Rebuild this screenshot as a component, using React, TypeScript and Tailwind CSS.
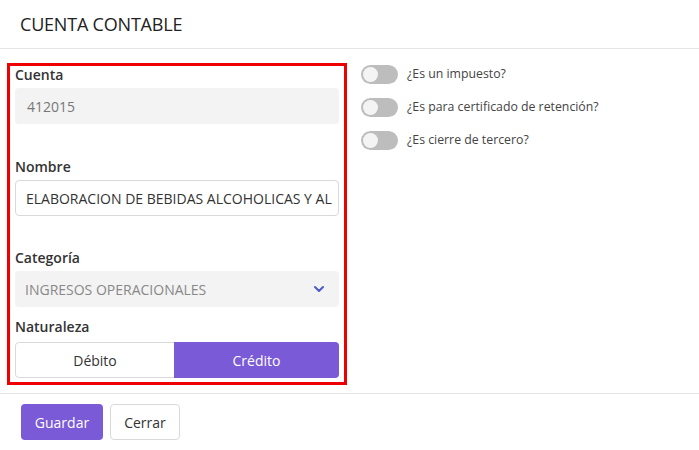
import { ChevronDown } from "lucide-react";

function Toggle({ label }: { label: string }) {
  return (
    <div className="flex items-center gap-[9px]">
      <span className="flex h-[19px] w-[37px] items-center rounded-full bg-[#bdbdbd] px-[2px]">
        <span className="h-[15px] w-[15px] rounded-full bg-[#f4f4f4]" />
      </span>
      <span className="text-[12.3px] text-[#444]">{label}</span>
    </div>
  );
}

export default function App() {
  return (
    <div
      className="flex h-[450px] w-[699px] flex-col bg-white text-[#333]"
      style={{ fontFamily: '"Open Sans", "Noto Sans", sans-serif' }}
    >
      <div className="flex h-[49px] items-center border-b border-[#e5e5e5] px-[20px]">
        <h1 className="text-[18px] tracking-[-0.2px] text-[#222]">CUENTA CONTABLE</h1>
      </div>

      <div className="flex gap-[14px] pl-[7px] pt-[14px]">
        <div className="flex w-[340px] flex-col border-[3px] border-[#ee0000] px-[5px] pb-[4px]">
          <label className="text-[14px] leading-[18px] font-semibold text-[#333]">Cuenta</label>
          <div className="mt-[4px] flex h-[36px] items-center rounded-[4px] bg-[#f3f3f3] px-[12px] text-[14px] text-[#777]">
            412015
          </div>

          <label className="mt-[34px] text-[14px] leading-[18px] font-semibold text-[#333]">Nombre</label>
          <div className="mt-[4px] flex h-[36px] items-center overflow-hidden whitespace-nowrap rounded-[4px] border border-[#d9d9d9] px-[10px] text-[14px] text-[#333]">
            ELABORACION DE BEBIDAS ALCOHOLICAS Y AL
          </div>

          <label className="mt-[33px] text-[14px] leading-[18px] font-semibold text-[#333]">Categoría</label>
          <div className="mt-[4px] flex h-[36px] items-center justify-between rounded-[4px] bg-[#f3f3f3] pl-[10px] pr-[12px] text-[14px] text-[#888]">
            <span>INGRESOS OPERACIONALES</span>
            <ChevronDown size={16} strokeWidth={3} className="text-[#4a5ac8]" />
          </div>

          <label className="mt-[11px] text-[14px] leading-[18px] font-semibold text-[#333]">Naturaleza</label>
          <div className="mt-[6px] flex h-[36px] overflow-hidden rounded-[4px] text-[14px]">
            <div className="flex w-[159px] items-center justify-center rounded-l-[4px] border border-r-0 border-[#d9d9d9] text-[#333]">
              Débito
            </div>
            <div className="flex flex-1 items-center justify-center bg-[#7a5ad6] text-white">
              Crédito
            </div>
          </div>
        </div>

        <div className="flex flex-col gap-[14px] pt-[2px]">
          <Toggle label="¿Es un impuesto?" />
          <Toggle label="¿Es para certificado de retención?" />
          <Toggle label="¿Es cierre de tercero?" />
        </div>
      </div>

      <div className="mt-[8px] flex gap-[7px] border-t border-[#e5e5e5] px-[21px] pt-[10px]">
        <button className="h-[36px] w-[82px] rounded-[4px] bg-[#7a5ad6] text-[14px] text-white">
          Guardar
        </button>
        <button className="h-[36px] w-[70px] rounded-[4px] border border-[#d9d9d9] bg-white text-[14px] text-[#333]">
          Cerrar
        </button>
      </div>
    </div>
  );
}
